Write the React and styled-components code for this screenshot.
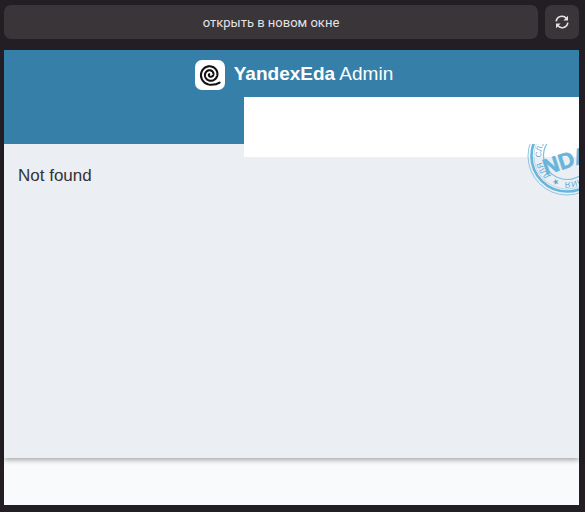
import React from 'react'
import styled, { createGlobalStyle } from 'styled-components'

const GlobalStyle = createGlobalStyle`
  * {
    box-sizing: border-box;
  }

  body {
    margin: 0;
    background: #231e23;
    font-family: 'Liberation Sans', Arial, sans-serif;
  }
`

const Page = styled.div`
  display: flex;
  flex-direction: column;
  gap: 11px;
  min-height: 100vh;
  padding: 5px 6px 7px 4px;
`

const Toolbar = styled.div`
  display: flex;
  gap: 7px;
`

const ToolbarButton = styled.button`
  display: flex;
  align-items: center;
  justify-content: center;
  flex: ${({ $wide }) => ($wide ? '1' : '0 0 34px')};
  height: 34px;
  padding: 0;
  border: 0;
  border-radius: 7px;
  background: #3a3539;
  color: #e4e2e4;
  font-family: Roboto, sans-serif;
  font-size: 13px;
  cursor: pointer;
`

const Frame = styled.div`
  position: relative;
  display: flex;
  flex: 1;
  flex-direction: column;
  background: #f9fafc;
`

const Header = styled.header`
  position: relative;
  height: 94px;
  background: #367fa9;
`

const Logo = styled.a`
  display: flex;
  align-items: center;
  justify-content: center;
  gap: 9px;
  height: 47px;
  padding: 2px 0 0 5px;
  color: #fff;
  font-size: 19px;
  line-height: 24px;
  text-decoration: none;
`

const LogoIcon = styled.svg`
  width: 30px;
  height: 30px;
  border-radius: 7px;
  background: #fff;
`

const LogoText = styled.span`
  padding-bottom: 2px;
`

const Menu = styled.nav`
  position: absolute;
  top: 47px;
  right: 0;
  left: 240px;
  height: 60px;
  background: #fff;
`

const Content = styled.main`
  flex: 1;
  padding: 22px 14px;
  background: #ebeef3;
  box-shadow: 0 2px 5px rgba(0, 0, 0, 0.35);
  color: #333;
  font-size: 17px;
  line-height: 20px;
`

const Message = styled.p`
  margin: 0;
`

const Footer = styled.footer`
  height: 47px;
`

const StampLayer = styled.div`
  position: absolute;
  top: 94px;
  right: 0;
  bottom: 0;
  width: 52px;
  overflow: hidden;
  pointer-events: none;
`

const StampIcon = styled.svg`
  display: block;
  width: 80px;
  height: 80px;
  margin-top: -28px;
`

// radius grows evenly with the angle, then the tail runs off to the lower right
const spiralPath = () => {
  const points = []
  for (let i = 0; i <= 120; i++) {
    const t = i / 120
    const angle = Math.PI / 2 + t * 2.3 * 2 * Math.PI
    const radius = 10.2 - 9.2 * t
    points.push(
      `${(15.2 + radius * Math.cos(angle)).toFixed(2)} ${(14.5 + radius * Math.sin(angle)).toFixed(2)}`
    )
  }
  return `M24.6 22.6Q21 25 ${points.join('L')}`
}

const Refresh = () => (
  <svg width="14" height="14" viewBox="0 0 14 14" fill="none" aria-hidden="true">
    <path d="M1.2 6.4A5.8 5.8 0 0 1 11.4 3.4M12.8 7.6A5.8 5.8 0 0 1 2.6 10.6" stroke="currentColor" strokeWidth="1.6" />
    <path d="M13 0.8V5.4H8.4ZM1 13.2V8.6H5.6Z" fill="currentColor" />
  </svg>
)

const Stamp = () => (
  <StampIcon viewBox="0 0 80 80" fill="none" aria-hidden="true">
    <defs>
      <path id="stamp-ring" d="M40 66A26 26 0 1 1 40.1 66" />
    </defs>
    <circle cx="40" cy="40" r="39" stroke="#8cc6e3" strokeWidth="1" />
    <circle cx="40" cy="40" r="35.5" stroke="#69b4da" strokeWidth="2.6" />
    <circle cx="40" cy="40" r="33" stroke="#a9d4ea" strokeWidth="0.8" />
    <circle cx="40" cy="40" r="23.5" stroke="#7fbfe0" strokeWidth="1.2" />
    <g fill="#5aa9d4" fontFamily="'Liberation Sans', sans-serif" fontSize="8">
      <text transform="rotate(10 40 40)">
        <textPath href="#stamp-ring">{'\u00a0★\u00a0\u00a0ДЛЯ\u00a0\u00a0СЛУЖЕБНОГО'}</textPath>
      </text>
      <text transform="rotate(5 40 40)" textAnchor="end">
        <textPath href="#stamp-ring" startOffset="100%">ПОЛЬЗОВАНИЯ</textPath>
      </text>
    </g>
    <text
      x="39"
      y="52"
      transform="rotate(-18 39 44)"
      textAnchor="middle"
      fill="#69b4da"
      stroke="#69b4da"
      strokeWidth="0.6"
      fontFamily="'Liberation Sans', sans-serif"
      fontSize="22"
      fontWeight="700"
    >
      NDA
    </text>
  </StampIcon>
)

const App = () => {
  return (
    <>
      <GlobalStyle />
      <Page>
        <Toolbar>
          <ToolbarButton type="button" $wide>
            открыть в новом окне
          </ToolbarButton>
          <ToolbarButton type="button" aria-label="обновить">
            <Refresh />
          </ToolbarButton>
        </Toolbar>
        <Frame>
          <Header>
            <Logo href="/">
              <LogoIcon viewBox="0 0 30 30" aria-hidden="true">
                <path d={spiralPath()} fill="none" stroke="#111" strokeWidth="2.1" strokeLinecap="round" />
              </LogoIcon>
              <LogoText>
                <b>YandexEda</b> Admin
              </LogoText>
            </Logo>
            <Menu />
          </Header>
          <Content>
            <Message>Not found</Message>
          </Content>
          <Footer />
          <StampLayer>
            <Stamp />
          </StampLayer>
        </Frame>
      </Page>
    </>
  )
}

export default App
